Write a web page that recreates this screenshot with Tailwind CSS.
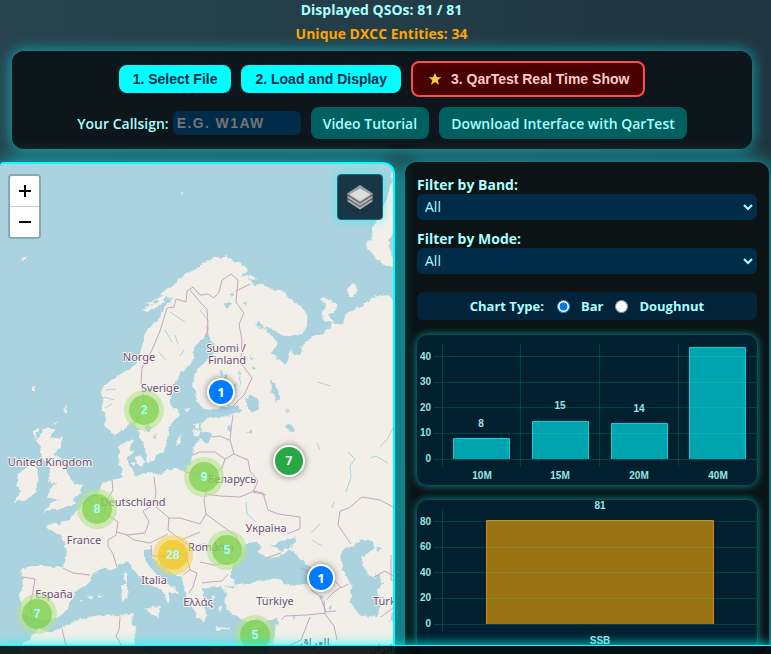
<!DOCTYPE html>
<html lang="en">
<head>
    <meta charset="UTF-8">
    <meta name="viewport" content="width=device-width, initial-scale=1.0">
    <title>QSO Map</title>
    <!-- Tailwind Cdn -->
    <script src="https://cdn.jsdelivr.net/npm/@tailwindcss/browser@4"></script>
</head>
<body class="flex flex-col h-screen overflow-hidden bg-linear-to-r from-[#27444f] to-[#20353f] font-['Segoe_UI','Open_Sans',sans-serif] text-sm font-semibold text-[#aaffff]">

    <!-- Counters -->
    <header class="flex flex-col gap-1 pl-3 pr-5 mb-[7px] text-center font-bold leading-5">
        <p>Displayed QSOs: 81 / 81</p>
        <p class="text-[#ffa500]">Unique DXCC Entities: 34</p>
    </header>

    <!-- Controls -->
    <section class="flex flex-col gap-[10px] ml-3 mr-[19px] mb-[13px] p-[10px] rounded-xl bg-[#0d171b] shadow-[0_0_15px_#00ffff99]">
        <div class="flex items-center justify-center gap-[10px] font-['Liberation_Sans',Arial,sans-serif] font-bold">
            <button type="button" class="h-7 px-[14px] rounded-lg bg-[#00ffff] text-[#002b49]">1. Select File</button>
            <button type="button" class="h-7 px-[14px] rounded-lg bg-[#00ffff] text-[#002b49]">2. Load and Display</button>
            <button type="button" class="flex items-center gap-2 h-9 px-[14px] rounded-lg border-2 border-[#ff4d4d] bg-[#4a0000] text-[#ffcccc]">
                <svg class="size-4" viewBox="1 1 14 14"><path d="M8 1.500 9.800 6h4.900l-3.900 3 1.500 5L8 11.200 3.700 14l1.500-5L1.300 6h4.900z" fill="#ffc83d" stroke="#1a0800" stroke-width="0.800"/></svg>
                3. QarTest Real Time Show
            </button>
        </div>
        <div class="flex items-center justify-center gap-[10px]">
            <div class="flex items-center gap-1">
                <label for="callsign" class="pt-px">Your Callsign:</label>
                <input type="text" id="callsign" placeholder="e.g. W1AW" class="w-32 h-6 px-1 rounded-md bg-[#002b49] uppercase tracking-widest font-['Liberation_Sans',Arial,sans-serif] font-bold placeholder:text-[#757575]">
            </div>
            <button type="button" class="h-8 px-3 pt-px rounded-lg bg-[#006060]">Video Tutorial</button>
            <button type="button" class="h-8 px-3 pt-px rounded-lg bg-[#006060]">Download Interface with QarTest</button>
        </div>
    </section>

    <main class="grid grid-cols-[395fr_364fr] flex-1 min-h-0 gap-[10px] pr-[2px]">

        <!-- Map -->
        <div class="relative min-w-0 min-h-0 overflow-hidden rounded-t-xl rounded-tl-sm border-t-2 border-r-2 border-[#00ffff] bg-[#aad3df] shadow-[0_0_20px_#00ffffaa]">
            <svg class="block size-full" viewBox="0 164 393 490" preserveAspectRatio="xMinYMin slice" font-family="'Noto Sans', 'Open Sans', sans-serif">
                <defs>
                    <filter id="coast" x="0" y="0" width="100%" height="100%">
                        <feTurbulence type="fractalNoise" baseFrequency="0.18" numOctaves="3" seed="4"/>
                        <feDisplacementMap in="SourceGraphic" scale="5" xChannelSelector="R" yChannelSelector="G"/>
                    </filter>
                </defs>

                <g filter="url(#coast)" fill="#f2efe9">
                    <!-- Eurasia -->
                    <path d="M200 267 194 270 187 273 183 276 178 279 172 287 165 289 160 294 166 297 172 299 165 306 160 317 154 324 147 330 144 338 142 347 137 362 130 369 123 372 112 380 103 387 101 392 103 402 102 410 106 418 105 427 113 434 118 434 124 429 128 425 133 421 137 425 140 437 144 445 147 454 147 462 153 461 156 455 163 453 166 446 168 436 168 430 173 423 180 415 178 410 170 405 170 398 172 392 177 380 182 372 192 363 194 355 194 347 201 341 206 334 213 342 215 352 207 360 200 367 195 373 193 383 195 393 199 404 204 409 213 410 224 406 238 406 242 411 233 415 220 417 207 419 200 424 203 431 211 433 210 441 206 444 200 438 194 447 193 457 192 462 187 466 185 472 177 468 167 470 157 475 147 472 135 476 132 468 128 465 128 457 133 452 130 448 133 438 123 443 119 447 119 461 121 467 123 477 113 480 103 483 100 489 97 496 88 500 80 508 72 515 70 520 62 521 59 526 55 523 47 524 47 529 54 532 60 535 65 543 67 552 64 567 56 567 43 566 30 566 21 570 23 577 22 588 19 600 22 605 21 613 33 617 40 621 57 618 68 608 70 602 78 590 90 582 91 575 100 568 110 570 118 567 125 561 132 567 140 578 150 585 159 589 165 595 167 603 170 598 168 593 178 594 175 588 166 583 157 575 149 566 144 556 144 550 152 549 153 558 160 564 169 571 182 577 184 590 188 598 193 607 197 617 204 622 208 614 203 607 210 608 203 597 202 588 208 588 221 587 227 593 225 604 230 614 237 617 247 622 257 619 267 622 277 617 278 623 275 634 268 650 263 660 460 660 460 290 393 300 386 294 373 297 360 307 347 313 343 323 333 324 328 322 322 318 325 304 320 298 330 300 337 304 338 310 329 314 334 321 330 328 322 334 311 338 300 346 302 353 296 356 290 350 286 365 280 361 272 353 278 342 269 334 265 326 280 334 291 336 302 334 308 326 307 313 300 306 289 297 280 290 270 288 263 285 255 285 248 278 258 281 253 276 242 276 249 270 240 263 231 260 226 256 220 258 213 256 210 261 203 262z"/>
                    <!-- Great Britain and Ireland -->
                    <path d="M43 429 55 428 50 437 63 438 60 448 53 455 61 458 64 467 69 474 73 483 82 485 80 493 73 499 76 504 60 509 52 509 43 513 52 502 60 500 47 497 50 489 56 483 48 482 50 472 48 463 42 458 40 447 37 440z"/>
                    <path d="M30 463 37 467 38 477 36 493 27 499 14 503 20 492 17 486 17 475 23 470z"/>
                    <path d="M33 432 38 428 35 440z"/>
                    <!-- Africa -->
                    <path d="M10 660 22 645 32 637 38 629 48 632 62 628 77 620 100 615 120 616 133 613 132 623 137 630 134 640 139 650 150 653 160 660z"/>
                    <path d="M190 660 205 652 215 648 225 652 235 660z"/>
                    <!-- Novaya Zemlya and Kolguyev -->
                    <path d="M393 172 389 190 384 205 377 220 372 228 373 238 367 240 366 248 372 252 377 260 387 266 400 266 392 255 389 241 393 228 420 220 420 172z"/>
                    <path d="M348 288 353 284 358 289 354 296 348 296z"/>
                    <!-- Smaller islands -->
                    <path d="M142 310 149 306 159 302 153 300 166 295 164 302 149 311zM146 303 154 300 150 306z"/>
                    <path d="M123 575 126 571 127 579 125 583zM121 586 127 584 128 597 122 601zM144 608 161 606 158 617 151 614zM86 597 92 595 91 599zM99 594 103 596 98 597zM79 600 82 600 80 602z"/>
                    <path d="M135 458 141 455 145 461 140 466 136 463zM132 462 135 464 132 466zM177 440 181 434 180 442 177 446zM184 409 190 408 187 412zM194 424 199 423 199 427 194 428zM193 430 201 429 199 437 194 436z"/>
                    <path d="M214 627 229 628 228 630 216 630zM251 627 263 622 258 630zM21 261 28 256 26 260zM31 387 36 386 34 393zM64 410 67 404 66 413zM54 424 58 421 56 426zM180 192 183 193 181 195zM218 608 222 607 221 612zM212 596 215 598 211 599z"/>
                </g>

                <!-- Seas and lakes inside the land mass -->
                <g filter="url(#coast)" fill="#aad3df">
                    <path d="M231 568 237 562 242 552 247 543 257 542 262 547 258 552 267 558 276 557 284 553 290 550 298 556 310 567 314 578 308 584 298 586 285 583 276 578 266 580 257 581 247 585 237 584 231 578z"/>
                    <path d="M270 547 281 541 297 537 293 546 286 549 280 551 276 547z"/>
                    <path d="M340 557 343 550 352 547 360 540 374 540 373 550 361 557 365 570 374 578 384 583 377 590 380 607 377 617 360 615 350 603 352 587 343 570z"/>
                    <path d="M245 402 250 394 257 397 260 408 253 413 248 408zM270 380 276 385 280 398 276 402 272 392z"/>
                    <path d="M147 424 153 427 150 432 144 431zM155 433 157 437 154 440zM247 432 253 430 251 434zM286 425 291 423 295 431 290 432zM285 409 290 410 286 412zM228 425 231 424 230 432 227 431z"/>
                    <path d="M220 372 222 370 223 378zM224 378 227 374 228 390zM232 386 238 384 234 392zM238 372 240 370 241 388zM216 378 219 382 216 386zM250 355 254 358 251 359zM253 366 257 370 253 369zM228 295 233 291 234 296zM255 323 260 322 265 329 258 327zM225 303 231 303 228 309zM244 303 247 300 246 306z"/>
                    <path d="M237 624 234 630 236 632zM375 547 382 548 378 552zM320 594 324 596 322 600zM328 606 332 604 331 610zM292 618 296 614 294 620z"/>
                    <path d="M374 574 381 577 383 585 377 581zM225 585 238 586 233 589zM393 612 396 618 390 622z"/>
                </g>
                <g fill="none" stroke="#aad3df" stroke-width="1">
                    <path d="M165 330 172 342M170 312 185 322M159 352 166 360M175 335 178 344M200 310 209 322M184 350 180 356M348 452 355 459 350 466 351 477 346 492M370 458 376 456 388 463M380 447 388 438 393 428M317 443 320 450M311 533 320 524M332 508 334 502M312 540 322 546M246 502 247 514 256 522M106 390 116 389M104 397 114 400M105 408 112 404M150 400 154 408M318 382 330 386"/>
                </g>

                <!-- Borders -->
                <g fill="none" stroke="#c4a6bd" stroke-width="1">
                    <path d="M160 331 167 308 174 307 176 299 186 302 187 291 193 287 200 295 208 294 214 298 219 292 222 280 231 274 238 280 236 302 244 313 239 324 242 340 241 363 252 378 244 395 233 406"/>
                    <path d="M190 290 200 302 207 309 208 330 205 337M236 291 250 284M160 331 152 350 142 368 141 382 144 398 141 412 136 422M207 325 208 337"/>
                    <path d="M233 415 231 430 230 440 234 454 225 459 215 452 200 452 193 455M212 437 220 436 229 440M234 454 248 460 250 471 258 481 253 492 266 495M225 459 222 468 213 473 200 474 185 472M154 477 156 493 154 505 143 511 149 522 145 533 127 535 117 532"/>
                    <path d="M156 507 169 518 180 518 200 524 206 514 204 500 207 488M169 518 168 530 181 540 200 532M112 480 113 490 107 500 104 512 118 522 116 535 108 540 108 546 113 554 117 567M90 500 97 509 104 513M125 534 134 540 150 543 168 534"/>
                    <path d="M151 545 152 556 165 556 170 562M181 540 190 546 205 544 215 548M183 575 190 570 197 573 193 587 189 593M190 570 187 558 176 550M206 494 220 496 240 497 254 491 263 493 268 510 278 514 300 517 300 529 287 534M206 514 225 528 236 536 239 546M200 562 214 565 228 563M202 583 210 582 222 581 228 574M23 577 35 579 33 592 30 604 32 615M63 568 73 573 90 575"/>
                    <path d="M62 629 66 646 66 660M120 617 119 630 116 636 124 650M266 558 281 553M300 568 316 574 330 577 341 587 334 592 326 600M311 590 320 596 326 612 336 611M324 600 325 614 334 626 337 640M281 620 285 616 307 615 325 613M310 617 301 640 280 650M351 544 338 525 340 511 349 508 362 497 380 500 393 507M374 577 385 571 393 576M391 555 391 580 397 582M341 588 348 584M381 617 393 608"/>
                </g>

                <!-- Country names -->
                <g font-size="11" font-weight="400" fill="#6b4f73" stroke="#f7f4f1" stroke-width="2" paint-order="stroke" stroke-linejoin="round" text-anchor="middle">
                    <text x="139" y="361">Norge</text>
                    <text x="160" y="392">Sverige</text>
                    <text x="226" y="352">Suomi /</text>
                    <text x="227" y="364">Finland</text>
                    <text x="50" y="466">United Kingdom</text>
                    <text x="232" y="483">Беларусь</text>
                    <text x="133" y="506">Deutschland</text>
                    <text x="84" y="544">France</text>
                    <text x="266" y="532">Україна</text>
                    <text x="211" y="551">România</text>
                    <text x="154" y="584">Italia</text>
                    <text x="54" y="598">España</text>
                    <text x="198" y="606">Ελλάς</text>
                    <text x="275" y="605">Türkiye</text>
                    <text x="373" y="605" text-anchor="start">Türk</text>
                    <text x="315" y="646" font-family="'DejaVu Sans', sans-serif">العراق</text>
                    <text x="381" y="652" font-family="'DejaVu Sans', sans-serif">ایران</text>
                </g>

                <!-- Clusters -->
                <g fill="#b5e28c" fill-opacity="0.6">
                    <circle cx="144" cy="410" r="20"/><circle cx="204" cy="477" r="20"/><circle cx="97" cy="509" r="20"/>
                    <circle cx="227" cy="550" r="20"/><circle cx="37" cy="614" r="20"/><circle cx="255" cy="635" r="20"/>
                    <circle cx="173" cy="555" r="20" fill="#f1d357"/>
                </g>
                <g fill="#6ecc39" fill-opacity="0.6">
                    <circle cx="144" cy="410" r="15"/><circle cx="204" cy="477" r="15"/><circle cx="97" cy="509" r="15"/>
                    <circle cx="227" cy="550" r="15"/><circle cx="37" cy="614" r="15"/><circle cx="255" cy="635" r="15"/>
                    <circle cx="173" cy="555" r="15" fill="#f0c20c"/>
                </g>
                <g font-family="'Liberation Sans', Arial, sans-serif" font-size="12" font-weight="bold" fill="#aaffff" text-anchor="middle">
                    <text x="144" y="414">2</text>
                    <text x="204" y="481">9</text>
                    <text x="97" y="513">8</text>
                    <text x="227" y="554">5</text>
                    <text x="37" y="618">7</text>
                    <text x="255" y="639">5</text>
                    <text x="173" y="559">28</text>
                </g>

                <!-- Station markers -->
                <g stroke="#fff" stroke-width="2" class="drop-shadow-[0_0_3px_#00000080]">
                    <circle cx="221" cy="392" r="13" fill="#007bff"/>
                    <circle cx="321" cy="578" r="13" fill="#007bff"/>
                    <circle cx="289" cy="461" r="15" fill="#28a745"/>
                </g>
                <g font-family="'Open Sans', sans-serif" font-size="13" font-weight="bold" fill="#fff" text-anchor="middle">
                    <text x="221" y="397">1</text>
                    <text x="321" y="583">1</text>
                    <text x="289" y="465" font-size="12">7</text>
                </g>
            </svg>

            <!-- Zoom -->
            <div class="absolute left-2 top-[10px] flex flex-col overflow-hidden rounded border-2 border-black/20 bg-clip-padding">
                <button type="button" aria-label="Zoom in" class="flex items-center justify-center w-[29px] h-[31px] border-b border-[#ccc] bg-white">
                    <svg class="size-[14px]" viewBox="0 0 14 14"><path d="M7 1v12M1 7h12" stroke="#000" stroke-width="2"/></svg>
                </button>
                <button type="button" aria-label="Zoom out" class="flex items-center justify-center w-[29px] h-[30px] bg-white">
                    <svg class="size-[14px]" viewBox="0 0 14 14"><path d="M1 7h12" stroke="#000" stroke-width="2"/></svg>
                </button>
            </div>

            <!-- Layers -->
            <button type="button" aria-label="Layers" class="absolute right-[10px] top-[10px] flex items-center justify-center size-[46px] rounded border border-[#0f6f7c] bg-[#1a3646] shadow-[0_0_10px_#00ffff99]">
                <svg class="size-[26px]" viewBox="0 0 26 26">
                    <path d="M0 17 13 8.500 26 17 13 25.500z" fill="#b4b4b4"/>
                    <path d="M0 13 13 21.500 26 13v2L13 23.500 0 15z" fill="#6e6e6e"/>
                    <path d="M0 13 13 4.500 26 13 13 21.500z" fill="#c3c3c3"/>
                    <path d="M0 9.500 13 18 26 9.500v2L13 20 0 11.500z" fill="#6e6e6e"/>
                    <path d="M0 9.500 13 1 26 9.500 13 18z" fill="#97a3ab"/>
                    <path d="M2.500 10.500 13 4.500l10.500 6L13 17z" fill="#dedede"/>
                </svg>
            </button>
        </div>

        <!-- Filters and charts -->
        <aside class="min-w-0 min-h-0 p-3 rounded-xl bg-[#0b1315] shadow-[0_0_20px_#00ffff99]">
            <div class="mb-2">
                <label for="band" class="block pt-px leading-[19px] font-bold">Filter by Band:</label>
                <div class="relative">
                    <select id="band" class="block w-full h-[26px] px-2 rounded-md appearance-none bg-[#002b49] font-normal"><option>All</option></select>
                    <svg class="absolute right-1 top-2 w-[10px] h-[10px] pointer-events-none" viewBox="0 0 10 10"><path d="M1 3l4 4 4-4" fill="none" stroke="#aaffff" stroke-width="2"/></svg>
                </div>
            </div>
            <div class="mb-[18px]">
                <label for="mode" class="block pt-px leading-[19px] font-bold">Filter by Mode:</label>
                <div class="relative">
                    <select id="mode" class="block w-full h-[26px] px-2 rounded-md appearance-none bg-[#002b49] font-normal"><option>All</option></select>
                    <svg class="absolute right-1 top-2 w-[10px] h-[10px] pointer-events-none" viewBox="0 0 10 10"><path d="M1 3l4 4 4-4" fill="none" stroke="#aaffff" stroke-width="2"/></svg>
                </div>
            </div>
            <div class="flex items-center justify-center h-7 pt-px mb-[15px] rounded-md bg-[#02233a] text-[13px] font-bold">
                <span class="mr-[13px]">Chart Type:</span>
                <input type="radio" id="bar" name="charttype" class="size-[13px] mr-[11px] accent-[#0078d7]" checked>
                <label for="bar" class="mr-3">Bar</label>
                <input type="radio" id="doughnut" name="charttype" class="size-[13px] mr-[11px]">
                <label for="doughnut">Doughnut</label>
            </div>

            <!-- QSOs per band -->
            <div class="mb-[15px] rounded-[10px] bg-[#001f2f] shadow-[0_0_8px_#00ffff99]">
                <svg class="block w-full" viewBox="0 0 340 150" font-family="'Liberation Sans', Arial, sans-serif" font-size="10" font-weight="bold" fill="#99e6e6">
                    <g fill="#00a4ae" stroke="#00d5dc">
                        <path d="M36.500 124V103.500h56V124M115.500 124V86.500h56V124M194.500 124V88.500h56V124M272.500 124V12.500h56V124"/>
                    </g>
                    <path d="M17 21.500h323M17 47.500h323M17 72.500h323M17 98.500h323M17 124.500h323M25.500 9v123M103.500 9v123M182.500 9v123M261.500 9v123" stroke="#00ffff" stroke-opacity="0.150"/>
                    <g text-anchor="end">
                        <text x="14" y="25">40</text>
                        <text x="14" y="50">30</text>
                        <text x="14" y="76">20</text>
                        <text x="14" y="101">10</text>
                        <text x="14" y="127">0</text>
                    </g>
                    <g text-anchor="middle">
                        <text x="64" y="92">8</text>
                        <text x="143" y="74">15</text>
                        <text x="222" y="77">14</text>
                        <text x="65" y="144">10M</text>
                        <text x="143" y="144">15M</text>
                        <text x="222" y="144">20M</text>
                        <text x="301" y="144">40M</text>
                    </g>
                </svg>
            </div>

            <!-- QSOs per mode -->
            <div class="rounded-[10px] bg-[#001f2f] shadow-[0_0_8px_#00ffff99]">
                <svg class="block w-full" viewBox="0 0 340 150" font-family="'Liberation Sans', Arial, sans-serif" font-size="10" font-weight="bold" fill="#99e6e6">
                    <path d="M69.500 124V20.500h227V124" fill="#997213" stroke="#d08c0a"/>
                    <path d="M17 21.500h323M17 47.500h323M17 72.500h323M17 98.500h323M17 124.500h323M25.500 9v123" stroke="#00ffff" stroke-opacity="0.150"/>
                    <g text-anchor="end">
                        <text x="14" y="25">80</text>
                        <text x="14" y="50">60</text>
                        <text x="14" y="76">40</text>
                        <text x="14" y="101">20</text>
                        <text x="14" y="127">0</text>
                    </g>
                    <g text-anchor="middle">
                        <text x="183" y="9">81</text>
                        <text x="183" y="144">SSB</text>
                    </g>
                </svg>
            </div>
        </aside>
    </main>

    <footer class="fixed inset-x-0 bottom-0 h-[9px] border-t border-[#00ffff] bg-[#000a14]/90 shadow-[0_0_12px_#00ffff]"></footer>

</body>
</html>
